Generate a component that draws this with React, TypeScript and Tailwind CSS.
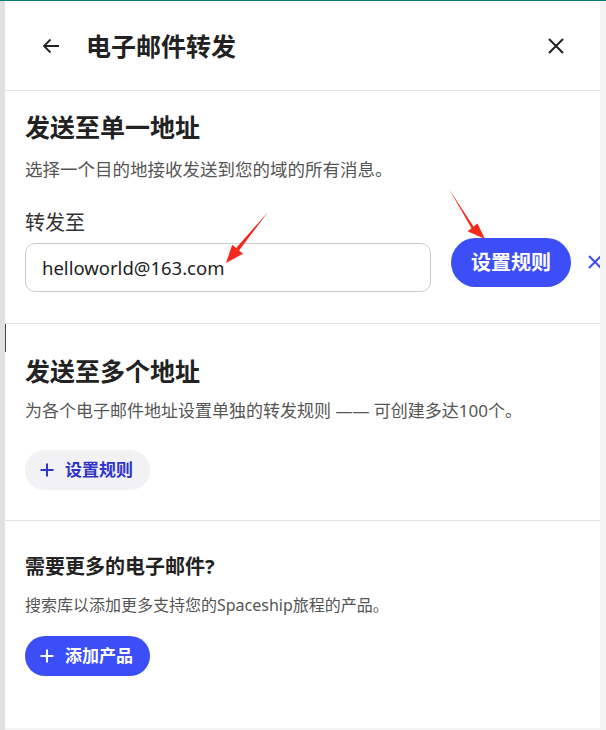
import React from "react";

const font = { fontFamily: '"Noto Sans", "Noto Sans CJK SC", sans-serif' };

function Plus({ color }: { color: string }) {
  return (
    <svg width="14" height="14" viewBox="0 0 14 14" fill="none">
      <path d="M7 0.5V13.5M0.5 7H13.5" stroke={color} strokeWidth="2" />
    </svg>
  );
}

export default function App() {
  return (
    <div
      className="relative w-[606px] h-[730px] overflow-hidden bg-[#f3f3f3] flex flex-col"
      style={font}
    >
      <div className="h-px w-full bg-[#0b7a75] shrink-0" />
      <div className="flex flex-1">
        <div className="w-[5px] bg-[#e1e1e1] shrink-0" />
        <div className="w-[595px] h-[727px] bg-white overflow-hidden shrink-0 flex flex-col">
          {/* header */}
          <div className="h-[90px] flex items-center pl-[36px] pr-[34px] border-b border-[#e3e3e3] shrink-0">
            <svg width="20" height="20" viewBox="0 0 20 20" fill="none">
              <path
                d="M18 10H3M9.5 3.5L3 10L9.5 16.5"
                stroke="#222"
                strokeWidth="1.8"
              />
            </svg>
            <div className="ml-[25px] text-[25px] leading-[32px] font-bold text-[#222]">
              电子邮件转发
            </div>
            <div className="flex-1" />
            <svg width="20" height="20" viewBox="0 0 20 20" fill="none">
              <path d="M3 3L17 17M17 3L3 17" stroke="#222" strokeWidth="2" />
            </svg>
          </div>

          {/* section 1 */}
          <div className="px-[20px] pt-[20px] pb-[31px] border-b border-[#e3e3e3] shrink-0">
            <div className="text-[25px] leading-[32px] font-bold text-[#222]">
              发送至单一地址
            </div>
            <div className="mt-[13px] text-[17.5px] leading-[26px] text-[#555]">
              选择一个目的地接收发送到您的域的所有消息。
            </div>
            <div className="mt-[27px] text-[20px] leading-[28px] text-[#333]">
              转发至
            </div>
            <div className="flex items-start mt-[1px] w-[620px]">
              <div className="mt-[5px] w-[406px] h-[49px] rounded-[10px] border border-[#cccccc] flex items-center px-[16px] text-[18.5px] text-[#222] shrink-0">
                helloworld@163.com
              </div>
              <button className="ml-[20px] w-[120px] h-[49px] rounded-full bg-[#3c4ef7] text-white text-[20px] font-bold shrink-0">
                设置规则
              </button>
              <div className="ml-[17px] mt-[17px] shrink-0">
                <svg width="14" height="14" viewBox="0 0 14 14" fill="none">
                  <path d="M1 1L13 13M13 1L1 13" stroke="#3c4ef7" strokeWidth="2" />
                </svg>
              </div>
            </div>
          </div>

          {/* section 2 */}
          <div className="px-[20px] pt-[31px] pb-[30px] border-b border-[#e3e3e3] shrink-0">
            <div className="text-[25px] leading-[32px] font-bold text-[#222]">
              发送至多个地址
            </div>
            <div className="mt-[11px] text-[17px] leading-[26px] text-[#555]">
              为各个电子邮件地址设置单独的转发规则 —— 可创建多达100个。
            </div>
            <button className="mt-[26px] h-[40px] w-[125px] rounded-full bg-[#f2f2f4] flex items-center pl-[15px] gap-[11px] text-[17px] font-bold text-[#2f35c8]">
              <Plus color="#2f35c8" />
              <span>设置规则</span>
            </button>
          </div>

          {/* section 3 */}
          <div className="px-[20px] pt-[33px] shrink-0">
            <div className="text-[20px] leading-[26px] font-bold text-[#222]">
              需要更多的电子邮件?
            </div>
            <div className="mt-[13px] text-[16px] leading-[24px] text-[#555]">
              搜索库以添加更多支持您的Spaceship旅程的产品。
            </div>
            <button className="mt-[19px] h-[40px] w-[125px] rounded-full bg-[#3c4ef7] flex items-center pl-[15px] gap-[11px] text-[17px] font-bold text-white">
              <Plus color="#ffffff" />
              <span>添加产品</span>
            </button>
          </div>
        </div>
        <div className="flex-1 bg-[#f4f4f4]" />
      </div>

      {/* caret artifact */}
      <div className="absolute left-[5px] top-[324px] w-px h-[28px] bg-[#444]" />

      {/* annotation arrows */}
      <svg
        className="absolute left-0 top-0 pointer-events-none"
        width="606"
        height="730"
        viewBox="0 0 606 730"
      >
        <polygon
          points="268,212 239.1,250.5 243,253.7 226,263 232.2,244.7 236.1,247.9"
          fill="#f42a1d"
        />
        <polygon
          points="449,189 473.5,226.5 477.5,223.5 485,239 467.5,231.3 471.5,228.3"
          fill="#f42a1d"
        />
      </svg>
    </div>
  );
}
